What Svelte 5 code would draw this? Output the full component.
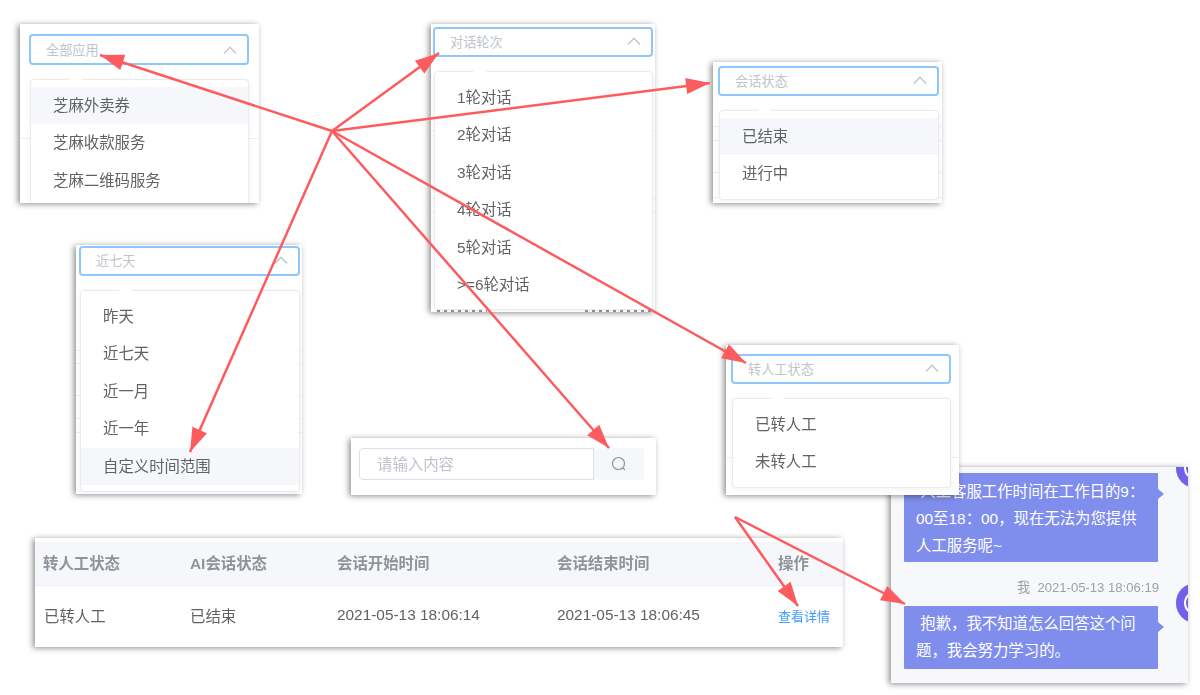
<script>
  const selects = [
    { id: "apps", x: 20, y: 24, w: 239, h: 179, pad: "10px 10px 0 9px", label: "全部应用", hover: 0, tall: true, bg: [114],
      items: ["芝麻外卖券", "芝麻收款服务", "芝麻二维码服务"] },
    { id: "turns", x: 431, y: 24, w: 224, h: 288, pad: "3px 2px 0 2px", label: "对话轮次", hover: -1, tall: false, bg: [106, 174, 188], tail: true,
      items: ["1轮对话", "2轮对话", "3轮对话", "4轮对话", "5轮对话", ">=6轮对话"] },
    { id: "state", x: 713, y: 62, w: 229, h: 141, pad: "4px 3px 0 5px", label: "会话状态", hover: 0, tall: false, bg: [64, 78, 110, 135],
      items: ["已结束", "进行中"] },
    { id: "range", x: 76, y: 245, w: 226, h: 249, pad: "1px 2px 0 3px", label: "近七天", hover: 4, tall: false, bg: [105, 118, 150, 173, 187],
      items: ["昨天", "近七天", "近一月", "近一年", "自定义时间范围"] },
    { id: "human", x: 726, y: 345, w: 233, h: 150, pad: "9px 8px 0 5px", label: "转人工状态", hover: -1, tall: false, bg: [112],
      items: ["已转人工", "未转人工"] },
  ];

  const arrows = [
    { x1: 332, y1: 131, x2: 100, y2: 55 },
    { x1: 332, y1: 131, x2: 439, y2: 53 },
    { x1: 332, y1: 131, x2: 710, y2: 83 },
    { x1: 332, y1: 131, x2: 190, y2: 452 },
    { x1: 332, y1: 131, x2: 609, y2: 448 },
    { x1: 332, y1: 131, x2: 746, y2: 363 },
    { x1: 735, y1: 517, x2: 798, y2: 606 },
    { x1: 735, y1: 517, x2: 905, y2: 604 },
  ];

  // head of each arrow as a triangle pointing at the tip
  function head(a) {
    const len = Math.hypot(a.x2 - a.x1, a.y2 - a.y1);
    const ux = (a.x2 - a.x1) / len;
    const uy = (a.y2 - a.y1) / len;
    const bx = a.x2 - ux * 24;
    const by = a.y2 - uy * 24;
    return `${a.x2},${a.y2} ${bx - uy * 8},${by + ux * 8} ${bx + uy * 8},${by - ux * 8}`;
  }
</script>

<div class="canvas">
  <section class="shot chat">
    <i class="avatar first"></i>
    <div class="bubble clipped">
      <p>&nbsp;人工客服工作时间在工作日的9：00至18：00，现在无法为您提供人工服务呢~</p>
    </div>
    <div class="meta">我&nbsp;&nbsp;2021-05-13 18:06:19</div>
    <i class="avatar second"></i>
    <div class="bubble">
      <p>&nbsp;抱歉，我不知道怎么回答这个问题，我会努力学习的。</p>
    </div>
  </section>

  {#each selects as s (s.id)}
    <section class="shot" style="left:{s.x}px;top:{s.y}px;width:{s.w}px;height:{s.h}px;padding:{s.pad}">
      {#each s.bg as line}
        <i class="trace" style="top:{line}px"></i>
      {/each}
      {#if s.tail}
        <div class="tail"><i class="short"></i><i class="long"></i></div>
      {/if}
      <div class="select" class:tall={s.tall}>
        <span>{s.label}</span>
        <svg width="14" height="8" viewBox="0 0 14 8"><path d="M1 7.5 7 1.2l6 6.3" /></svg>
      </div>
      <div class="menu">
        <ul>
          {#each s.items as item, i}
            <li class:hover={i === s.hover}>{item}</li>
          {/each}
        </ul>
      </div>
    </section>
  {/each}

  <section class="shot search">
    <div class="search-input">请输入内容</div>
    <div class="search-btn">
      <svg width="16" height="16" viewBox="0 0 16 16"><circle cx="7.5" cy="7.5" r="6" /><path d="m12 12 2 2" /></svg>
    </div>
  </section>

  <section class="shot table">
    <div class="row head">
      <span>转人工状态</span><span>AI会话状态</span><span>会话开始时间</span><span>会话结束时间</span><span>操作</span>
    </div>
    <div class="row body">
      <span>已转人工</span><span>已结束</span><span>2021-05-13 18:06:14</span><span>2021-05-13 18:06:45</span><a href="#detail">查看详情</a>
    </div>
  </section>

  <svg class="arrows" width="1200" height="695" viewBox="0 0 1200 695">
    {#each arrows as a}
      <line x1={a.x1} y1={a.y1} x2={a.x2} y2={a.y2} />
      <polygon points={head(a)} />
    {/each}
  </svg>
</div>

<style>
  :global(body) {
    background: #fff;
  }
  .canvas {
    position: relative;
    width: 1200px;
    height: 695px;
    overflow: hidden;
    font-family: "Liberation Sans", "Noto Sans CJK SC", sans-serif;
    color: #606266;
  }
  /* the pasted screenshots are slightly soft, so the blur is on purpose */
  .shot {
    position: absolute;
    box-sizing: border-box;
    background: #fff;
    box-shadow: -2px 1px 6px rgba(0, 0, 0, 0.45);
    overflow: hidden;
    filter: blur(0.3px);
  }
  .trace {
    position: absolute;
    left: 0;
    right: 0;
    height: 1px;
    background: #ebeef5;
  }
  /* sliced-off row of the table under the dropdown */
  .tail {
    position: absolute;
    left: 6px;
    right: 4px;
    bottom: 0;
    height: 2px;
    display: flex;
    justify-content: space-between;
    z-index: 1;
  }
  .tail i {
    background: repeating-linear-gradient(90deg, #8b8d92 0 3px, transparent 3px 7px);
  }
  .tail .short {
    width: 50px;
  }
  .tail .long {
    width: 66px;
  }
  .select {
    position: relative;
    box-sizing: border-box;
    height: 30px;
    border: 2px solid #8fc6fc;
    border-radius: 4px;
    background: #fff;
    padding: 0 10px 2px 15px;
    display: flex;
    align-items: center;
    justify-content: space-between;
    font-size: 13.2px;
    color: #c0c4cc;
  }
  .select.tall {
    height: 31px;
    padding-bottom: 0;
  }
  .select svg path {
    fill: none;
    stroke: #c0c4cc;
    stroke-width: 1.3;
  }
  .menu {
    position: relative;
    margin: 14px 0 0 1px;
    border: 1px solid #e9ebf0;
    border-radius: 4px;
    background: #fff;
    box-shadow: 0 1px 5px rgba(0, 0, 0, 0.06);
  }
  .menu::before {
    content: "";
    position: absolute;
    top: -5px;
    left: 40px;
    width: 9px;
    height: 9px;
    background: #fff;
    transform: rotate(45deg);
  }
  ul {
    position: relative;
    list-style: none;
    margin: 0;
    padding: 7px 0 6px;
  }
  li {
    height: 37.4px;
    line-height: 38px;
    padding: 0 22px;
    font-size: 15.4px;
  }
  li.hover {
    background: #f5f7fa;
  }
  .search {
    left: 351px;
    top: 438px;
    width: 305px;
    height: 57px;
    padding: 10px 12px 0 8px;
    display: flex;
    align-items: flex-start;
  }
  .search-input {
    box-sizing: border-box;
    width: 235px;
    height: 32px;
    line-height: 32px;
    padding-left: 17px;
    border: 1px solid #dcdfe6;
    border-radius: 4px 0 0 4px;
    font-size: 15.4px;
    color: #c0c4cc;
  }
  .search-btn {
    flex: 1;
    height: 32px;
    background: #f5f7fa;
    border-radius: 0 4px 4px 0;
    display: flex;
    align-items: center;
    justify-content: center;
  }
  .search-btn svg {
    fill: none;
    stroke: #909399;
    stroke-width: 1.2;
  }
  .table {
    left: 35px;
    top: 538px;
    width: 808px;
    height: 109px;
    padding-top: 4px;
  }
  .row {
    display: grid;
    grid-template-columns: 147px 147px 220px 221px 1fr;
    align-items: center;
    padding-left: 8px;
    box-sizing: border-box;
  }
  .head {
    height: 44px;
    padding-bottom: 3px;
    background: #f5f7fa;
    border-bottom: 1px solid #ebeef5;
    font-size: 15.4px;
    font-weight: bold;
    color: #909399;
  }
  .body {
    height: 61px;
    padding-bottom: 3px;
    font-size: 15.4px;
  }
  .body span:first-child {
    padding-left: 1px;
  }
  .body a {
    font-size: 13px;
    color: #409eff;
    text-decoration: none;
  }
  .chat {
    left: 891px;
    top: 467px;
    width: 297px;
    height: 216px;
    background: #f7f8fc;
    padding: 6px 0 0 13px;
  }
  .bubble {
    position: relative;
    box-sizing: border-box;
    width: 254px;
    padding: 4px 12px 5px;
    background: #7f8eec;
    border-radius: 1px;
    font-size: 15.4px;
    line-height: 27px;
    color: #fff;
    word-break: break-all;
  }
  .bubble.clipped {
    height: 89px;
    padding-top: 5px;
  }
  .bubble::after {
    content: "";
    position: absolute;
    right: -6px;
    top: 16px;
    border-left: 6px solid #7f8eec;
    border-top: 5px solid transparent;
    border-bottom: 5px solid transparent;
  }
  p {
    margin: 0;
  }
  .meta {
    width: 255px;
    height: 44px;
    line-height: 51px;
    text-align: right;
    font-size: 13.1px;
    color: #a0a0a0;
  }
  .avatar {
    position: absolute;
    left: 285px;
    width: 40px;
    height: 40px;
    border-radius: 50%;
    background: #7360e8;
    box-shadow: inset 0 0 0 8px #7360e8, inset 0 0 0 10px #fff;
  }
  .avatar.first {
    top: -19px;
  }
  .avatar.second {
    top: 116px;
  }
  .arrows {
    position: absolute;
    left: 0;
    top: 0;
    pointer-events: none;
  }
  .arrows line {
    stroke: #fd5c5f;
    stroke-width: 2.5;
  }
  .arrows polygon {
    fill: #fd5c5f;
  }
</style>
